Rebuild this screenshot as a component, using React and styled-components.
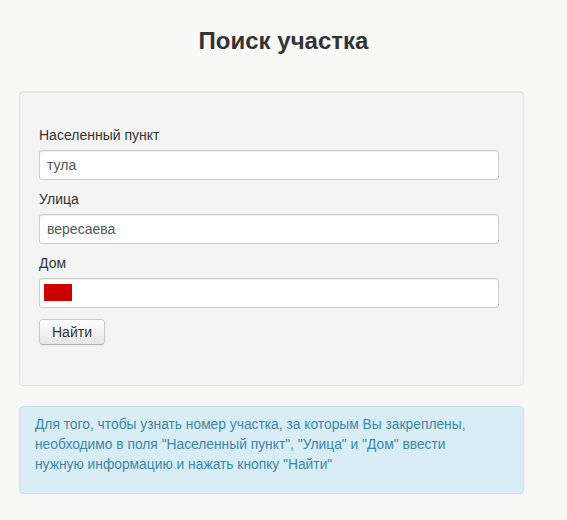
import React from "react";
import styled, { createGlobalStyle } from "styled-components";

const GlobalStyle = createGlobalStyle`
    html, body {
        margin: 0;
        padding: 0;
        background: #f8f8f7;
        font-family: "Liberation Sans", Arial, sans-serif;
        font-size: 14px;
        line-height: 20px;
        color: #333;
    }
`;

const Page = styled.div`
    width: 567px;
    min-height: 520px;
    padding-top: 21px;
    box-sizing: border-box;
`;

const Title = styled.h2`
    margin: 0 0 30px;
    font-size: 24px;
    line-height: 40px;
    font-weight: bold;
    text-align: center;
    color: #333;
`;

const Well = styled.form`
    margin: 0 0 20px 19px;
    width: 505px;
    box-sizing: border-box;
    padding: 33px 19px 40px;
    background: #f4f4f4;
    border: 1px solid #e3e3e3;
    border-radius: 4px;
    box-shadow: inset 0 1px 1px rgba(0, 0, 0, 0.05);
`;

const Label = styled.label`
    display: block;
    margin-bottom: 5px;
    line-height: 20px;
    color: #333;
`;

const Field = styled.div`
    position: relative;
    width: 460px;
    margin-bottom: ${(p) => (p.$last ? "11px" : "9px")};
`;

const Input = styled.input`
    display: block;
    width: 100%;
    height: 30px;
    box-sizing: border-box;
    padding: 4px 7px;
    font-family: inherit;
    font-size: 14px;
    color: #555;
    background: #fff;
    border: 1px solid #ccc;
    border-radius: 3px;
    box-shadow: inset 0 1px 1px rgba(0, 0, 0, 0.075);
    outline: none;
`;

const RedMark = styled.span`
    position: absolute;
    left: 5px;
    top: 6px;
    width: 28px;
    height: 17px;
    background: #cc0000;
`;

const Button = styled.button`
    display: block;
    height: 26px;
    padding: 0 12px;
    font-family: inherit;
    font-size: 14px;
    line-height: 24px;
    color: #333;
    background: linear-gradient(to bottom, #ffffff, #e6e6e6);
    border: 1px solid #ccc;
    border-bottom-color: #b3b3b3;
    border-radius: 4px;
    box-shadow: inset 0 1px 0 rgba(255, 255, 255, 0.2), 0 1px 2px rgba(0, 0, 0, 0.05);
    cursor: pointer;
`;

const Alert = styled.div`
    margin-left: 19px;
    width: 505px;
    box-sizing: border-box;
    padding: 8px 35px 8px 15px;
    background: #d9edf7;
    border: 1px solid #bce8f1;
    border-radius: 4px;
    color: #3a87ad;
    font-size: 13.8px;

    p {
        margin: 0 0 10px;
    }
`;

const fields = [
    { id: "city", label: "Населенный пункт", value: "тула" },
    { id: "street", label: "Улица", value: "вересаева" },
    { id: "house", label: "Дом", value: "", masked: true },
];

const App = () => {
    return (
        <>
            <GlobalStyle />
            <Page>
                <Title>Поиск участка</Title>
                <Well onSubmit={(e) => e.preventDefault()}>
                    {fields.map((f, i) => (
                        <div key={f.id}>
                            <Label htmlFor={f.id}>{f.label}</Label>
                            <Field $last={i === fields.length - 1}>
                                <Input id={f.id} defaultValue={f.value} />
                                {f.masked && <RedMark />}
                            </Field>
                        </div>
                    ))}
                    <Button type="submit">Найти</Button>
                </Well>
                <Alert>
                    <p>
                        Для того, чтобы узнать номер участка, за которым Вы закреплены,
                        <br />
                        необходимо в поля "Населенный пункт", "Улица" и "Дом" ввести
                        <br />
                        нужную информацию и нажать кнопку "Найти"
                    </p>
                </Alert>
            </Page>
        </>
    );
};

export default App;
